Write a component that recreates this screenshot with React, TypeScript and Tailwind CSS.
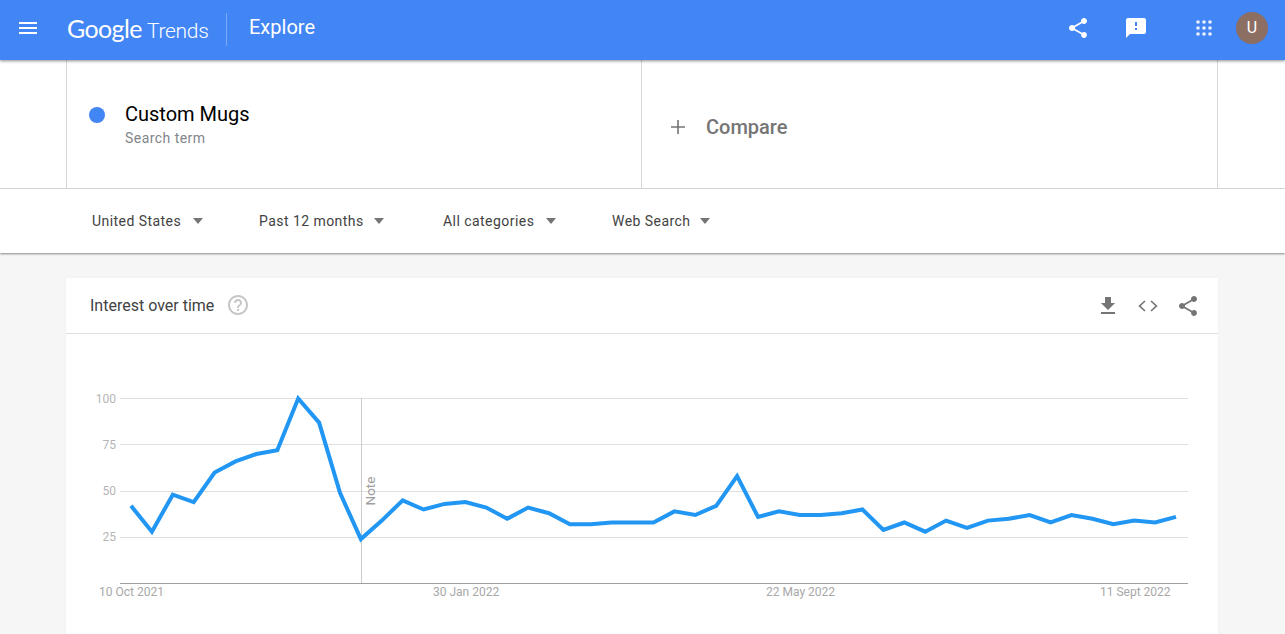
const values = [42,28,48,44,60,66,70,72,100,87,49,24,34,45,40,43,44,41,35,41,38,32,32,33,33,33,39,37,42,58,36,39,37,37,38,40,29,33,28,34,30,34,35,37,33,37,35,32,34,33,36];
const points = values.map((v, i) => `${(131 + i * 20.9).toFixed(1)},${(398.5 + (100 - v) * 1.85).toFixed(1)}`).join(" ");

const shareD = "M18 16.08c-.76 0-1.44.3-1.96.77L8.91 12.7c.05-.23.09-.46.09-.7s-.04-.47-.09-.7l7.05-4.11c.54.5 1.25.81 2.04.81 1.66 0 3-1.34 3-3s-1.34-3-3-3-3 1.34-3 3c0 .24.04.47.09.7L8.04 9.81C7.5 9.31 6.79 9 6 9c-1.66 0-3 1.34-3 3s1.34 3 3 3c.79 0 1.5-.31 2.04-.81l7.12 4.16c-.05.21-.08.43-.08.65 0 1.61 1.31 2.92 2.92 2.92 1.61 0 2.92-1.31 2.92-2.92s-1.31-2.92-2.92-2.92z";

function Icon({ d, className }: { d: string; className: string }) {
  return (
    <svg viewBox="0 0 24 24" className={className} fill="currentColor">
      <path d={d} />
    </svg>
  );
}

function Filter({ label, className }: { label: string; className: string }) {
  return (
    <div className={`flex items-center text-[14px] tracking-[0.45px] text-[#424242] ${className}`}>
      <span>{label}</span>
    </div>
  );
}

function Caret() {
  return <div className="mx-px h-0 w-0 border-x-[5px] border-t-[6px] border-x-transparent border-t-[#757575]" />;
}

export default function App() {
  return (
    <div className="flex h-[634px] w-[1285px] flex-col overflow-hidden bg-[#f6f6f6] font-['Roboto',sans-serif]">
      <header className="relative z-20 flex h-[60px] shrink-0 items-center bg-[#4285f4] text-white shadow-[0_1px_3px_rgba(0,0,0,0.45)]">
        <Icon className="ml-4 -mt-[4px] h-6 w-6" d="M3 18h18v-2H3v2zm0-5h18v-2H3v2zm0-7v2h18V6H3z" />
        <div className="ml-[27px] -mt-[2px] flex w-[159px] items-baseline whitespace-nowrap">
          <span className="font-['Lato',sans-serif] text-[25px] tracking-[-0.6px]">Google</span>
          <span className="ml-[5px] text-[21px] font-light tracking-[-0.3px]">Trends</span>
        </div>
        <div className="-mt-[2px] h-[33px] w-px bg-white/30" />
        <span className="ml-[22px] -mt-[6px] text-[20px]">Explore</span>
        <Icon className="-mt-[4px] ml-auto h-6 w-6" d={shareD} />
        <Icon className="-mt-[4px] ml-[34px] h-6 w-6" d="M20 2H4c-1.1 0-1.99.9-1.99 2L2 22l4-4h14c1.1 0 2-.9 2-2V4c0-1.1-.9-2-2-2zm-7 12h-2v-2h2v2zm0-4h-2V6h2v4z" />
        <svg viewBox="0 0 24 24" className="-mt-[4px] ml-[44px] h-6 w-6" fill="#ffffff" fillOpacity="0.9">
          {[6, 12, 18].map((y) => [6, 12, 18].map((x) => <circle key={`${x}-${y}`} cx={x} cy={y} r="1.8" />))}
        </svg>
        <div className="-mt-[4px] ml-[20px] mr-[17px] flex h-8 w-8 items-center justify-center rounded-full bg-[#8d6e63] text-[16px] text-white">U</div>
      </header>

      <div className="flex h-[129px] shrink-0 border-b border-[#dcdcdc] bg-white pl-[66px]">
        <div className="flex w-[1152px] border-x border-[#d6d6d6]">
          <div className="flex w-[575px] items-start border-r border-[#d6d6d6] pl-[22px] pt-[42px]">
            <div className="mt-[5px] h-4 w-4 rounded-full bg-[#4285f4]" />
            <div className="ml-5">
              <div className="text-[20px] leading-6 text-black">Custom Mugs</div>
              <div className="mt-[3px] text-[14px] leading-[18px] tracking-[0.45px] text-[#80868b]">Search term</div>
            </div>
          </div>
          <div className="flex flex-1 items-center pl-[28px] pt-[6px]">
            <svg viewBox="0 0 16 16" className="h-4 w-4" stroke="#757575" strokeWidth="1.6">
              <path d="M8 1v14M1 8h14" />
            </svg>
            <span className="ml-5 text-[20px] font-medium text-[#757575]">Compare</span>
          </div>
        </div>
      </div>

      <div className="relative z-10 flex h-[64px] shrink-0 items-center bg-white pl-[92px] shadow-[0_1px_2px_rgba(0,0,0,0.45)]">
        <Filter label="United States" className="w-[100px]" />
        <Caret />
        <Filter label="Past 12 months" className="ml-[55px] w-[114px]" />
        <Caret />
        <Filter label="All categories" className="ml-[58px] w-[102px]" />
        <Caret />
        <Filter label="Web Search" className="ml-[55px] w-[87px]" />
        <Caret />
      </div>

      <div className="ml-[66px] mt-[25px] flex w-[1152px] flex-1 flex-col bg-white shadow-[0_0_1px_rgba(0,0,0,0.08)]">
        <div className="flex h-[56px] shrink-0 items-center border-b border-[#e0e0e0] pl-6 pr-[18px]">
          <span className="text-[16px] text-[#424242]">Interest over time</span>
          <Icon className="ml-[12px] -mt-[2px] h-6 w-6 text-[#c6c6c6]" d="M11 18h2v-2h-2v2zm1-16C6.48 2 2 6.48 2 12s4.48 10 10 10 10-4.48 10-10S17.52 2 12 2zm0 18c-4.41 0-8-3.59-8-8s3.59-8 8-8 8 3.59 8 8-3.59 8-8 8zm0-14c-2.21 0-4 1.79-4 4h2c0-1.1.9-2 2-2s2 .9 2 2c0 2-3 1.75-3 5h2c0-2.25 3-2.5 3-5 0-2.21-1.79-4-4-4z" />
          <Icon className="ml-auto h-6 w-6 text-[#757575]" d="M19 9h-4V3H9v6H5l7 7 7-7zM5 18v2h14v-2H5z" />
          <svg viewBox="0 0 24 24" className="ml-4 h-6 w-6" fill="none" stroke="#757575" strokeWidth="1.7">
            <path d="M9 7l-5.4 5 5.4 5M15 7l5.4 5-5.4 5" />
          </svg>
          <Icon className="ml-4 h-6 w-6 text-[#757575]" d={shareD} />
        </div>
        <svg viewBox="66 334 1152 300" className="h-[300px] w-[1152px] shrink-0" fontFamily="Roboto, sans-serif">
          {[398.5, 444.5, 491.5, 537.5].map((y) => (
            <line key={y} x1="120" x2="1188" y1={y} y2={y} stroke="#e0e0e0" strokeWidth="1" />
          ))}
          <line x1="120" x2="1188" y1="583.5" y2="583.5" stroke="#9e9e9e" strokeWidth="1" />
          <line x1="361.5" x2="361.5" y1="398" y2="583" stroke="#cccccc" strokeWidth="1" />
          <g fontSize="12" fill="#b5b5b5" textAnchor="end">
            <text x="116" y="403">100</text>
            <text x="116" y="449">75</text>
            <text x="116" y="495">50</text>
            <text x="116" y="541">25</text>
          </g>
          <g fontSize="12" fill="#a8a8a8">
            <text x="99" y="596">10 Oct 2021</text>
            <text x="433" y="596">30 Jan 2022</text>
            <text x="766" y="596">22 May 2022</text>
            <text x="1100" y="596">11 Sept 2022</text>
          </g>
          <text transform="translate(375 505.5) rotate(-90)" fontSize="13.5" fill="#9e9e9e">Note</text>
          <polyline points={points} fill="none" stroke="#2196f3" strokeWidth="4" strokeLinejoin="miter" />
        </svg>
      </div>
    </div>
  );
}
